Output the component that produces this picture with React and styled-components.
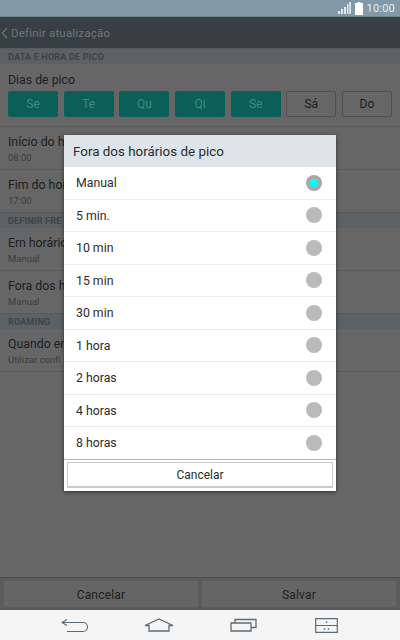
import React from "react";
import styled, { createGlobalStyle } from "styled-components";

const DAYS = [
  { label: "Se", on: true },
  { label: "Te", on: true },
  { label: "Qu", on: true },
  { label: "Qi", on: true },
  { label: "Se", on: true },
  { label: "Sá", on: false },
  { label: "Do", on: false },
];

const OPTIONS = ["Manual", "5 min.", "10 min", "15 min", "30 min", "1 hora", "2 horas", "4 horas", "8 horas"];

const App = () => {
  return (
    <Screen>
      <GlobalStyle />
      <StatusBar>
        <svg width="13" height="13" viewBox="0 0 13 13">
          <path d="M0 9h2v3H0zM3 7h2v5H3zM6 5h2v7H6zM9 2h1.500v10H9zM11.300 0h1.700v12h-1.700z" fill="#e4e8ea" />
        </svg>
        <svg width="8" height="13" viewBox="0 0 8 13">
          <path d="M2.500 0h3v1H8v12H0V1h2.500z" fill="#fff" />
        </svg>
        <Clock>10:00</Clock>
      </StatusBar>
      <Header>
        <svg width="7" height="12" viewBox="0 0 7 12">
          <path d="M6 1 1.200 6 6 11" fill="none" stroke="#70777b" strokeWidth="1.200" />
        </svg>
        <HeaderTitle>Definir atualização</HeaderTitle>
      </Header>
      <Section>DATA E HORA DE PICO</Section>
      <DaysBlock>
        <RowTitle>Dias de pico</RowTitle>
        <DayList>
          {DAYS.map((day, i) => (
            <DayButton key={i} $on={day.on}>
              {day.label}
            </DayButton>
          ))}
        </DayList>
      </DaysBlock>
      <Row>
        <RowTitle>Início do h</RowTitle>
        <RowSub>08:00</RowSub>
      </Row>
      <Row>
        <RowTitle>Fim do hor</RowTitle>
        <RowSub>17:00</RowSub>
      </Row>
      <Section>DEFINIR FRE</Section>
      <Row>
        <RowTitle>Em horário</RowTitle>
        <RowSub>Manual</RowSub>
      </Row>
      <Row>
        <RowTitle>Fora dos h</RowTitle>
        <RowSub>Manual</RowSub>
      </Row>
      <Section>ROAMING</Section>
      <Row>
        <RowTitle>Quando em</RowTitle>
        <RowSub>Utilizar confi</RowSub>
      </Row>
      <Spacer />
      <Footer>
        <FooterButton>Cancelar</FooterButton>
        <FooterButton>Salvar</FooterButton>
      </Footer>
      <NavBar>
        <svg width="27" height="15" viewBox="0 0 27 15">
          <path d="M6 1.500 1 4.500 6 7.500M1 4.500H22a4 4 0 0 1 0 9H6" fill="none" stroke="#5d6b75" strokeWidth="1.100" />
        </svg>
        <svg width="30" height="14" viewBox="0 0 30 14">
          <path d="M1 7.500 15 1l14 6.500H25V13H5V7.500z" fill="none" stroke="#5d6b75" strokeWidth="1.300" />
        </svg>
        <svg width="29" height="14" viewBox="0 0 29 14">
          <path d="M1 5h20v8H1zM5 5V1.500h21v8h-5" fill="none" stroke="#5d6b75" strokeWidth="1.300" />
        </svg>
        <svg width="23" height="15" viewBox="0 0 23 15">
          <path d="M.7.700h21.600v13.600H.7zM.7 7.500h21.600" fill="none" stroke="#5d6b75" strokeWidth="1.200" />
          <path d="M10.800 3.300h1.400v1.400h-1.400zM8.800 10.300h1.400v1.400H8.800zM12.800 10.300h1.400v1.400h-1.400z" fill="#5d6b75" />
        </svg>
      </NavBar>
      <Dialog>
        <DialogTitle>Fora dos horários de pico</DialogTitle>
        {OPTIONS.map((option, i) => (
          <Option key={option} $last={i === OPTIONS.length - 1}>
            <OptionLabel>{option}</OptionLabel>
            <Radio $checked={i === 0} />
          </Option>
        ))}
        <DialogFooter>
          <DialogButton>Cancelar</DialogButton>
        </DialogFooter>
      </Dialog>
    </Screen>
  );
};

export default App;

const GlobalStyle = createGlobalStyle`
  html, body {
    margin: 0;
    padding: 0;
  }
  body {
    font-family: Roboto, "Liberation Sans", sans-serif;
  }
`;

const Screen = styled.div`
  position: relative;
  display: flex;
  flex-direction: column;
  width: 400px;
  height: 640px;
  overflow: hidden;
  background-color: #666666;
`;

const StatusBar = styled.div`
  display: flex;
  align-items: center;
  justify-content: flex-end;
  gap: 4px;
  height: 16px;
  padding-right: 5px;
  background-color: #8199a8;
  border-bottom: 1px solid #6d818d;
`;

const Clock = styled.span`
  font-size: 11px;
  letter-spacing: 0.2px;
  color: #e8ecee;
`;

const Header = styled.div`
  display: flex;
  align-items: center;
  gap: 3px;
  height: 31px;
  padding-left: 1px;
  background-color: #373e44;
  border-bottom: 1px solid #555c61;
`;

const HeaderTitle = styled.span`
  font-size: 11.500px;
  letter-spacing: 0.2px;
  color: #70777b;
`;

const Section = styled.div`
  display: flex;
  align-items: center;
  height: 15px;
  padding-left: 8px;
  font-size: 9px;
  font-weight: 700;
  letter-spacing: 0.2px;
  color: #3f4447;
  background-color: #5b6164;
`;

const DaysBlock = styled.div`
  display: flex;
  flex-direction: column;
  gap: 3px;
  height: 63px;
  padding: 9px 8px 0;
  box-sizing: border-box;
  border-bottom: 1px solid #5a5a5a;
`;

const DayList = styled.div`
  display: flex;
  justify-content: space-between;
`;

const DayButton = styled.div`
  display: flex;
  align-items: center;
  justify-content: center;
  box-sizing: border-box;
  width: 50px;
  height: 26px;
  border-radius: 2px;
  font-size: 12px;
  color: ${(p) => (p.$on ? "#3e8a82" : "#1d1d1d")};
  background-color: ${(p) => (p.$on ? "#0c5e59" : "transparent")};
  border: ${(p) => (p.$on ? "none" : "1px solid #505050")};
`;

const Row = styled.div`
  display: flex;
  flex-direction: column;
  justify-content: center;
  gap: 2px;
  box-sizing: border-box;
  height: 43px;
  padding: 2px 0 0 8px;
  border-bottom: 1px solid #5a5a5a;
`;

const RowTitle = styled.div`
  font-size: 12.300px;
  line-height: 15px;
  white-space: nowrap;
  color: #1d1d1d;
`;

const RowSub = styled.div`
  font-size: 9.500px;
  line-height: 11px;
  white-space: nowrap;
  color: #3d3d3d;
`;

const Spacer = styled.div`
  flex: 1;
`;

const Footer = styled.div`
  display: flex;
  gap: 4px;
  height: 33px;
  box-sizing: border-box;
  padding: 3px 4px;
  background-color: #5c5c5c;
  border-top: 1px solid #4c4c4c;
`;

const FooterButton = styled.div`
  flex: 1;
  display: flex;
  align-items: center;
  justify-content: center;
  padding-top: 1px;
  font-size: 12px;
  letter-spacing: 0.2px;
  color: #1d1d1d;
  background-color: #656565;
`;

const NavBar = styled.div`
  display: flex;
  align-items: center;
  height: 30px;
  padding-left: 61px;
  box-sizing: border-box;
  gap: 56px;
  background-color: #f5f5f5;
`;

const Dialog = styled.div`
  position: absolute;
  top: 135px;
  left: 64px;
  width: 272px;
  box-shadow: 0 1px 4px rgba(0, 0, 0, 0.55);
  background-color: #ffffff;
`;

const DialogTitle = styled.div`
  display: flex;
  align-items: center;
  height: 32px;
  padding-left: 9px;
  font-size: 13.400px;
  color: #2b2b2b;
  background-color: #dde5eb;
`;

const Option = styled.div`
  display: flex;
  align-items: center;
  justify-content: space-between;
  box-sizing: border-box;
  height: 32.500px;
  padding: 0 14px 0 12px;
  font-size: 12.300px;
  color: #2b2b2b;
  border-bottom: 1px solid ${(p) => (p.$last ? "#b4babd" : "#e9e9e9")};
`;

const OptionLabel = styled.span`
  padding-top: 1px;
`;

const Radio = styled.span`
  display: flex;
  align-items: center;
  justify-content: center;
  width: 16px;
  height: 16px;
  border-radius: 50%;
  background-color: ${(p) => (p.$checked ? "#a8a8a8" : "#bababa")};
  &::after {
    content: "";
    width: 8px;
    height: 8px;
    border-radius: 50%;
    background-color: #0ff;
    display: ${(p) => (p.$checked ? "block" : "none")};
  }
`;

const DialogFooter = styled.div`
  padding: 2px 3px 3px;
  background-color: #ffffff;
`;

const DialogButton = styled.div`
  display: flex;
  align-items: center;
  justify-content: center;
  height: 26px;
  padding-top: 1px;
  box-sizing: border-box;
  font-size: 12px;
  color: #2b2b2b;
  background-color: #ffffff;
  border: 1px solid #c5cbce;
  border-bottom: 2px solid #c5cbce;
  border-radius: 1px;
`;
